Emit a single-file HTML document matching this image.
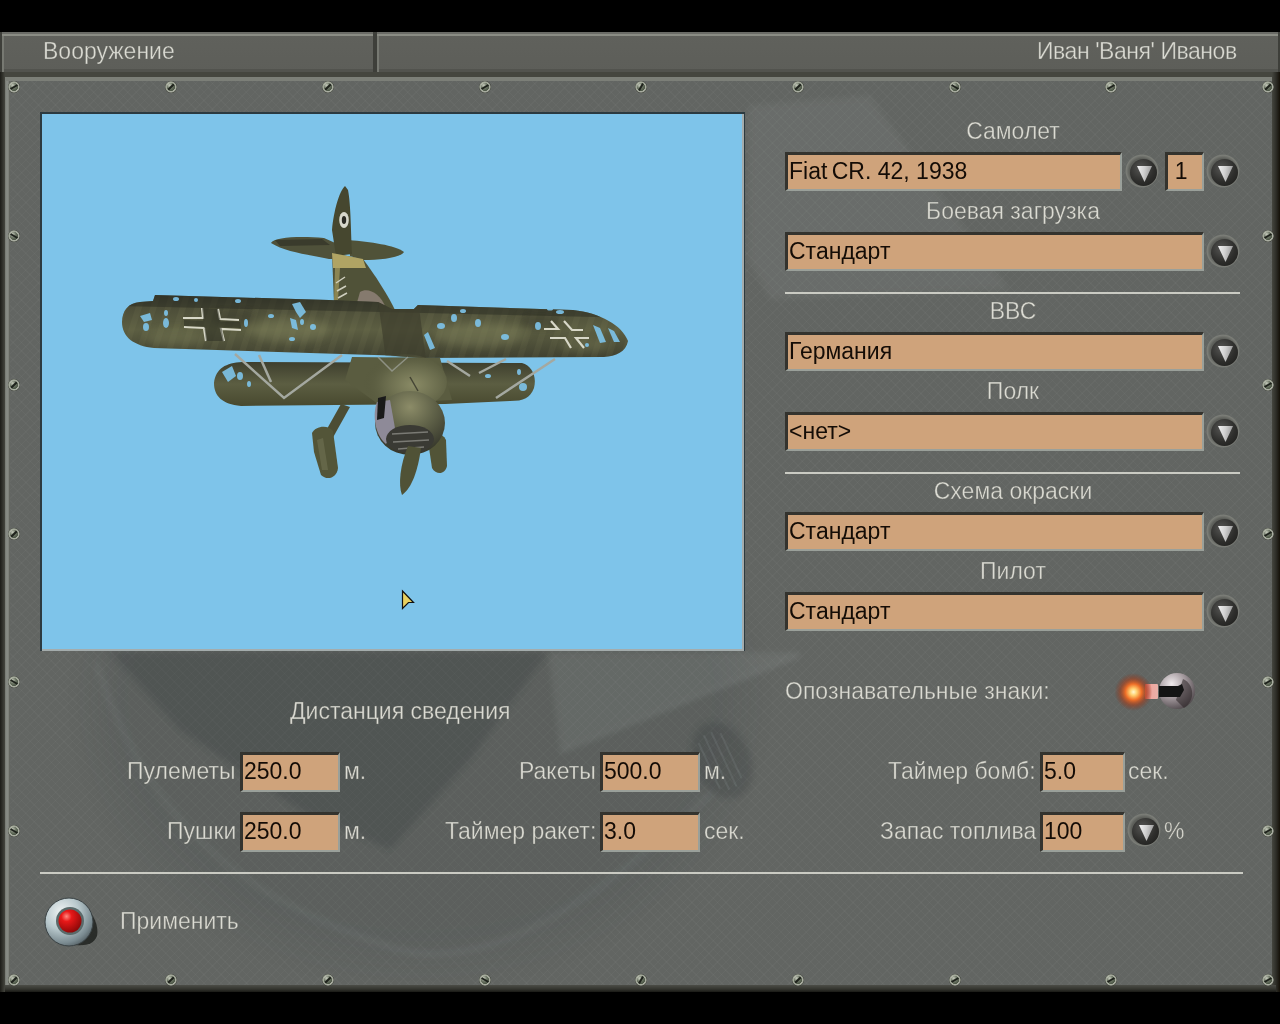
<!DOCTYPE html>
<html><head><meta charset="utf-8">
<style>
*{margin:0;padding:0;box-sizing:border-box}
html,body{width:1280px;height:1024px;overflow:hidden;background:#000}
body{position:relative;font-family:"Liberation Sans",sans-serif;font-size:23px;color:#dcdcd4}
.abs{position:absolute}
.hdr{position:absolute;left:0;top:32px;width:1280px;height:40px;background:#3e3f3a}
.tab{position:absolute;top:32px;height:40px;background:linear-gradient(#60615c,#5d5e59);border-top:2px solid #6a6b66;box-shadow:inset 0 2px 0 #8a8c84,inset 2px 0 0 #777972,inset 0 -3px 0 #52534e}
.frame{position:absolute;left:0;top:72px;width:1280px;height:920px;background:linear-gradient(90deg,#1c1c17 0,#45463f 5px,#45463f 1272px,#2e2e28 1276px,#141008 1280px)}
.bev{position:absolute;left:5px;top:77px;width:1267px;height:908px;background:linear-gradient(#7c7f78,#7c7f78) 0 0/100% 4px no-repeat,linear-gradient(90deg,#74776f,#8a8e88 2px,#7a7d76 4px,#50524c 5px) 0 0/5px 100% no-repeat}
.face{position:absolute;left:10px;top:81px;width:1262px;height:904px;background-color:#626562;
 background-image:repeating-linear-gradient(45deg,rgba(255,255,255,0.025) 0 1px,transparent 1px 6px),repeating-linear-gradient(-45deg,rgba(255,255,255,0.025) 0 1px,transparent 1px 6px)}
.fbot{position:absolute;left:5px;top:985px;width:1271px;height:7px;background:linear-gradient(#4c4d47,#34352f 4px,#1a1a16)}
.screw{position:absolute;width:12px;height:12px;border-radius:50%;background:radial-gradient(circle at 38% 35%,rgba(210,214,200,.9) 0,rgba(150,158,140,.4) 30%,rgba(0,0,0,0) 55%),radial-gradient(circle closest-side,#5a6454 0,#4a5444 62%,#aeb2a6 72%,#9a9e92 88%,#34372f 100%)}
.screw i{position:absolute;left:2px;top:5px;width:8px;height:2px;background:#1e221c}
.lbl{position:absolute;white-space:pre;line-height:1;will-change:transform;-webkit-text-stroke:0.5px rgba(100,101,96,0.7);transform:scaleY(1.075);transform-origin:0 19.5px}
.lbl.c{width:600px;text-align:center}
.fld{position:absolute;background:#cfa37b;border-top:3px solid #34332e;border-left:3px solid #34332e;border-right:2px solid #9aa09a;border-bottom:2px solid #9aa09a;color:#140c06;white-space:pre;line-height:1}
.fld span{position:absolute;left:1px;top:5px;will-change:transform;transform:scaleY(1.075);transform-origin:0 19.5px}
.btn{position:absolute;width:34px;height:34px;border-radius:50%;background:radial-gradient(circle closest-side,#4a4c47 0,#5e605b 75%,#7c7e78 93%,rgba(90,92,87,0) 100%)}
.btn::before{content:"";position:absolute;left:5px;top:5px;width:27px;height:27px;border-radius:50%;background:radial-gradient(circle at 40% 35%,#555553 0,#2e2e2c 55%,#1a1a18 100%)}
.btn::after{content:"";position:absolute;left:12px;top:12px;width:15px;height:16px;clip-path:polygon(0 0,100% 0,50% 100%);background:linear-gradient(100deg,#f4f4f4 0,#d0d0d0 45%,#8a8a8a 100%)}
.hr{position:absolute;height:2px;background:#cacbc3}
</style></head><body>
<div class="hdr"></div>
<div class="tab" style="left:2px;width:371px"></div>
<div class="tab" style="left:377px;width:901px"></div>
<div class="lbl" style="left:43px;top:40px">Вооружение</div>
<div class="lbl" style="right:43px;top:40px;letter-spacing:-0.45px">Иван 'Ваня' Иванов</div>
<div class="frame"></div>
<div class="bev"></div>
<div class="face"></div>
<div class="fbot"></div>
<svg class="abs" style="left:0;top:0" width="1280" height="1024">
<defs><filter id="bl" x="-50%" y="-50%" width="200%" height="200%"><feGaussianBlur stdDeviation="18"/></filter>
<filter id="bl2"><feGaussianBlur stdDeviation="3"/></filter>
<clipPath id="fc"><rect x="10" y="81" width="1262" height="904"/></clipPath></defs>
<g clip-path="url(#fc)">
<ellipse cx="420" cy="700" rx="322" ry="260" fill="#263038" opacity=".10" filter="url(#bl)"/>
<path d="M110 652 L548 652 L470 760 L390 850 L300 810 L180 730 Z" fill="#1a2226" opacity=".16" filter="url(#bl2)"/>
<path d="M548 652 L800 652 L800 656 L560 752 Z" fill="#d8e0e0" opacity=".07" filter="url(#bl2)"/>
<path d="M560 752 L800 655" stroke="#c8d4d8" stroke-width="3" opacity=".10" filter="url(#bl2)"/>
<path d="M96 662 C140 800 220 895 400 950 C500 975 620 880 712 792" fill="none" stroke="#c8d8dc" stroke-width="4" opacity=".09" filter="url(#bl2)"/>
<ellipse cx="722" cy="760" rx="28" ry="40" transform="rotate(-25 722 760)" fill="#1c2426" opacity=".16" filter="url(#bl2)"/>
<g transform="rotate(-25 722 760)" stroke="#b8c4c8" stroke-width="2" opacity=".10"><path d="M708 735 L708 785 M716 730 L716 790 M724 730 L724 790 M732 735 L732 785"/></g>
<path d="M748 105 L870 95 L1010 290 L770 300 L748 260 Z" fill="#e8f0f0" opacity=".05" filter="url(#bl2)"/>
</g>
</svg>
<div class="screw" style="left:8px;top:81px"><i style="transform:rotate(-30deg)"></i></div>
<div class="screw" style="left:165px;top:81px"><i style="transform:rotate(135deg)"></i></div>
<div class="screw" style="left:322px;top:81px"><i style="transform:rotate(135deg)"></i></div>
<div class="screw" style="left:479px;top:81px"><i style="transform:rotate(-30deg)"></i></div>
<div class="screw" style="left:635px;top:81px"><i style="transform:rotate(-60deg)"></i></div>
<div class="screw" style="left:792px;top:81px"><i style="transform:rotate(135deg)"></i></div>
<div class="screw" style="left:949px;top:81px"><i style="transform:rotate(30deg)"></i></div>
<div class="screw" style="left:1105px;top:81px"><i style="transform:rotate(150deg)"></i></div>
<div class="screw" style="left:1262px;top:81px"><i style="transform:rotate(135deg)"></i></div>
<div class="screw" style="left:8px;top:974px"><i style="transform:rotate(-45deg)"></i></div>
<div class="screw" style="left:165px;top:974px"><i style="transform:rotate(135deg)"></i></div>
<div class="screw" style="left:322px;top:974px"><i style="transform:rotate(-45deg)"></i></div>
<div class="screw" style="left:479px;top:974px"><i style="transform:rotate(30deg)"></i></div>
<div class="screw" style="left:635px;top:974px"><i style="transform:rotate(-60deg)"></i></div>
<div class="screw" style="left:792px;top:974px"><i style="transform:rotate(135deg)"></i></div>
<div class="screw" style="left:949px;top:974px"><i style="transform:rotate(-30deg)"></i></div>
<div class="screw" style="left:1105px;top:974px"><i style="transform:rotate(-30deg)"></i></div>
<div class="screw" style="left:1262px;top:974px"><i style="transform:rotate(150deg)"></i></div>
<div class="screw" style="left:8px;top:230px"><i style="transform:rotate(30deg)"></i></div>
<div class="screw" style="left:8px;top:379px"><i style="transform:rotate(135deg)"></i></div>
<div class="screw" style="left:8px;top:528px"><i style="transform:rotate(135deg)"></i></div>
<div class="screw" style="left:8px;top:676px"><i style="transform:rotate(30deg)"></i></div>
<div class="screw" style="left:8px;top:825px"><i style="transform:rotate(30deg)"></i></div>
<div class="screw" style="left:1262px;top:230px"><i style="transform:rotate(150deg)"></i></div>
<div class="screw" style="left:1262px;top:379px"><i style="transform:rotate(-30deg)"></i></div>
<div class="screw" style="left:1262px;top:528px"><i style="transform:rotate(-30deg)"></i></div>
<div class="screw" style="left:1262px;top:676px"><i style="transform:rotate(150deg)"></i></div>
<div class="screw" style="left:1262px;top:825px"><i style="transform:rotate(-30deg)"></i></div>
<div class="abs" style="left:40px;top:112px;width:705px;height:539px;background:#2c3a40"></div>
<div class="abs" style="left:42px;top:114px;width:702px;height:537px;background:#a4acac"></div>
<div class="abs" style="left:42px;top:114px;width:700px;height:535px;background:#7ec4ea;overflow:hidden"></div>
<svg class="abs" style="left:42px;top:114px" width="700" height="535" viewBox="42 114 700 535">
<defs>
<linearGradient id="wg" x1="0" y1="0" x2="0" y2="1"><stop offset="0" stop-color="#35362a"/><stop offset=".2" stop-color="#4c4d38"/><stop offset=".55" stop-color="#5c5e42"/><stop offset="1" stop-color="#404130"/></linearGradient>
<linearGradient id="lg" x1="0" y1="0" x2="0" y2="1"><stop offset="0" stop-color="#3e3f2e"/><stop offset=".5" stop-color="#5c5e42"/><stop offset="1" stop-color="#48492f"/></linearGradient>
<radialGradient id="eg" cx=".5" cy=".25" r=".75"><stop offset="0" stop-color="#8c8c68"/><stop offset=".45" stop-color="#62644a"/><stop offset="1" stop-color="#34352a"/></radialGradient>
<pattern id="ribs" width="14" height="60" patternUnits="userSpaceOnUse" patternTransform="rotate(18)"><rect width="6" height="60" fill="#8a8a60" opacity=".10"/></pattern>
<clipPath id="uw"><path d="M122 322 C122 311 128 303 140 302 L153 301 L155 295 L329 300 L378 302 L392 309 L414 309 L418 305 L573 310 C600 313 622 325 628 341 C626 352 616 356 604 357 L420 358 L390 355.5 L154 348 C134 346 122 337 122 322 Z"/></clipPath>
</defs>
<!-- tail -->
<path d="M271 243 C274 237 300 236 324 238 L342 246 L338 259 L329 259 C310 255 285 252 271 243 Z" fill="#4f513a"/>
<path d="M275 240 L322 239 L330 245 L280 246 Z" fill="#3a3b2c"/>
<path d="M349 240 C370 242 395 245 404 252 C400 258 380 260 363 260 L350 256 Z" fill="#505238"/>
<path d="M345 186 C339 192 334 210 332 230 L336 256 L352 254 C351 235 351 205 348 190 Z" fill="#46472f"/>
<ellipse cx="344" cy="220" rx="4.8" ry="8" fill="#d8d8cc"/><ellipse cx="344" cy="220" rx="2.2" ry="4" fill="#2a2a24"/>
<!-- fuselage rear -->
<path d="M332 253 L363 259 C375 275 388 295 396 312 L334 303 Z" fill="#505238"/>
<path d="M332 253 L363 259 L366 268 L333 268 Z" fill="#b0a464"/>
<path d="M335 268 L340 268 L338 300 L334 300 Z" fill="#b2a866" opacity=".6"/>
<path d="M336 283 L345 277 M337 291 L346 286 M338 298 L347 293" stroke="#cfcfbf" stroke-width="1.5"/>
<path d="M360 292 C368 287 380 293 386 308 L356 306 Z" fill="#857a6e"/>
<!-- lower wing -->
<path d="M214 383 C216 368 226 363 242 362 L522 363 C532 366 537 376 534 388 C530 398 524 401 510 401 L445 404 L241 406 C222 404 214 396 214 383 Z" fill="url(#lg)"/>
<g fill="#7ec4ea" opacity=".9">
<path d="M222 372 L232 366 L236 376 L228 382 Z"/><ellipse cx="240" cy="376" rx="3" ry="4"/><ellipse cx="249" cy="384" rx="2" ry="3"/>
<ellipse cx="488" cy="376" rx="3" ry="2"/><ellipse cx="523" cy="387" rx="4" ry="4"/><ellipse cx="519" cy="372" rx="2" ry="3"/>
</g>
<!-- struts -->
<g stroke="#a4a8a0" stroke-width="2.5" fill="none">
<path d="M235 354 L284 398 L342 355"/><path d="M259 355 L271 382"/>
<path d="M555 359 L496 398 M506 359 L479 373 M447 361 L470 376"/>
</g>
<!-- upper wing -->
<path d="M122 322 C122 311 128 303 140 302 L153 301 L155 295 L329 300 L378 302 L392 309 L414 309 L418 305 L573 310 C600 313 622 325 628 341 C626 352 616 356 604 357 L420 358 L390 355.5 L154 348 C134 346 122 337 122 322 Z" fill="url(#wg)"/>
<g clip-path="url(#uw)">
<rect x="120" y="290" width="520" height="70" fill="url(#ribs)"/>
<path d="M120 290 L640 305 L640 318 L120 306 Z" fill="#2e2f24" opacity=".55"/>
<path d="M378 300 L418 300 L426 360 L386 360 Z" fill="#3e3f2e" opacity=".7"/>
<filter id="pb"><feGaussianBlur stdDeviation="4"/></filter>
<g filter="url(#pb)" opacity=".35">
<ellipse cx="290" cy="330" rx="40" ry="12" fill="#8a8c64"/>
<ellipse cx="175" cy="338" rx="30" ry="8" fill="#80825c"/>
<ellipse cx="480" cy="335" rx="45" ry="12" fill="#8a8c64"/>
<ellipse cx="585" cy="345" rx="25" ry="7" fill="#80825c"/>
<ellipse cx="235" cy="318" rx="22" ry="8" fill="#2a2b20"/>
<ellipse cx="540" cy="322" rx="22" ry="8" fill="#2a2b20"/>
</g>
</g>
<!-- holes -->
<g fill="#7ec4ea" opacity=".9">
<path d="M140 316 L150 313 L152 320 L144 322 Z"/><ellipse cx="146" cy="327" rx="3" ry="4"/><ellipse cx="166" cy="323" rx="3" ry="5"/><ellipse cx="166" cy="313" rx="2" ry="3"/>
<ellipse cx="246" cy="323" rx="2" ry="4"/><ellipse cx="271" cy="316" rx="3" ry="2"/><ellipse cx="292" cy="339" rx="3" ry="2"/>
<path d="M292 304 L300 302 L306 312 L300 318 L296 312 Z"/><path d="M290 318 L296 320 L298 330 L292 328 Z"/><ellipse cx="302" cy="322" rx="2" ry="3"/><ellipse cx="313" cy="327" rx="3" ry="3"/>
<ellipse cx="176" cy="299" rx="3" ry="2"/><ellipse cx="196" cy="300" rx="2" ry="2"/><ellipse cx="238" cy="301" rx="3" ry="2"/>
<path d="M424 335 L428 332 L435 348 L430 350 Z"/><ellipse cx="441" cy="326" rx="4" ry="3"/><ellipse cx="454" cy="318" rx="3" ry="4"/><ellipse cx="478" cy="323" rx="3" ry="4"/><ellipse cx="463" cy="311" rx="3" ry="2"/>
<ellipse cx="505" cy="337" rx="4" ry="3"/><ellipse cx="538" cy="326" rx="3" ry="4"/><ellipse cx="560" cy="312" rx="4" ry="2"/><ellipse cx="550" cy="309" rx="3" ry="1.5"/>
<path d="M593 325 L600 328 L606 342 L600 343 Z"/><path d="M608 328 L614 331 L620 342 L614 342 Z"/><ellipse cx="587" cy="345" rx="2" ry="2"/>
</g>
<!-- crosses -->
<g stroke="#d8d8c8" stroke-width="2.2" fill="none" stroke-linejoin="miter">
<path d="M183 318 L203 318 L202 308"/><path d="M218 309 L220 319 L239 320"/><path d="M184 327 L204 328 L206 341"/><path d="M241 330 L221 329 L224 341"/>
<path d="M544 329 L558 329 L551 321"/><path d="M564 321 L572 330 L583 330"/><path d="M550 338 L565 338 L571 348"/><path d="M589 338 L576 338 L584 348"/>
</g>
<path d="M203 318 L220 318 L221 329 L204 328 Z M202 308 L218 309 L224 341 L206 341 Z M184 320 L240 322 L241 328 L184 326 Z" fill="#2a2b22" opacity=".5"/>
<!-- fuselage between wings -->
<radialGradient id="fg" cx=".6" cy=".55" r=".6"><stop offset="0" stop-color="#8a8b66"/><stop offset=".6" stop-color="#66684a"/><stop offset="1" stop-color="#55573c" stop-opacity="0"/></radialGradient>
<path d="M352 357 L440 358 L452 400 L378 404 L345 380 Z" fill="#5a5c40"/>
<ellipse cx="405" cy="382" rx="42" ry="28" fill="url(#fg)"/>
<path d="M378 357 L392 371 L408 357" stroke="#9a9e94" stroke-width="1.5" fill="none" opacity=".8"/>
<path d="M410 377 L418 391" stroke="#2a2a22" stroke-width="1.5" opacity=".7"/>
<!-- landing gear -->
<path d="M341 404 L350 407 L331 441 L323 436 Z" fill="#4c4d34"/>
<path d="M312 433 C315 426 328 424 333 431 L338 468 C337 478 327 481 321 475 L314 452 Z" fill="#535538"/>
<path d="M317 440 L323 438 L328 470 L322 470 Z" fill="#6c6d50" opacity=".7"/>
<path d="M428 441 C432 432 442 432 446 440 L447 466 C445 475 436 475 432 468 Z" fill="#525437"/>
<!-- engine -->
<ellipse cx="410" cy="423" rx="35" ry="32" fill="url(#eg)"/>
<path d="M377 402 C372 415 375 435 386 444 L395 428 L390 400 Z" fill="#8e8a98"/>
<path d="M378 398 L386 396 L384 418 L377 420 Z" fill="#1a1a1a"/>
<ellipse cx="410" cy="439" rx="24" ry="14" fill="#3a3a34"/>
<path d="M392 434 L428 432 M393 442 L429 440 M398 449 L424 447" stroke="#7a7a74" stroke-width="1.5"/>
<path d="M408 446 L421 448 C418 470 412 488 402 495 C398 485 400 465 408 446 Z" fill="#505236"/>
<!-- cursor -->
<path d="M402.5 591 L413.5 602.5 L408.5 602.5 L402.5 608.5 Z" fill="#e8d060" stroke="#111" stroke-width="1.2" stroke-linejoin="miter"/>
</svg>


<!-- apply button -->
<svg class="abs" style="left:40px;top:892px" width="64" height="62" viewBox="40 892 64 62">
<defs>
<radialGradient id="sg" cx=".35" cy=".3" r=".8"><stop offset="0" stop-color="#f0f4f4"/><stop offset=".45" stop-color="#b8c8cc"/><stop offset=".8" stop-color="#7a8a90"/><stop offset="1" stop-color="#4a5458"/></radialGradient>
<radialGradient id="rg" cx=".35" cy=".3" r=".75"><stop offset="0" stop-color="#ff8a80"/><stop offset=".3" stop-color="#e81818"/><stop offset="1" stop-color="#8a0808"/></radialGradient>
</defs>
<path d="M84 906 C94 914 99 926 97 936 C94 944 86 946 76 945 L70 940 Z" fill="#1c1e1c" opacity=".8"/>
<circle cx="69" cy="922" r="24" fill="url(#sg)"/>
<circle cx="69" cy="922" r="24" fill="none" stroke="#3a4244" stroke-width="1"/>
<circle cx="70" cy="921" r="14" fill="#5a6a6a"/>
<circle cx="70" cy="921" r="11.5" fill="url(#rg)"/>
</svg>
<!-- toggle -->
<svg class="abs" style="left:1105px;top:660px" width="100" height="60" viewBox="1105 660 100 60">
<defs>
<radialGradient id="gl" cx=".5" cy=".5" r=".5"><stop offset="0" stop-color="#fff8d0"/><stop offset=".18" stop-color="#ffd070"/><stop offset=".42" stop-color="#f07028"/><stop offset=".7" stop-color="#a83c18" stop-opacity=".55"/><stop offset="1" stop-color="#802810" stop-opacity="0"/></radialGradient>
<radialGradient id="dg" cx=".35" cy=".3" r=".85"><stop offset="0" stop-color="#f0eaec"/><stop offset=".45" stop-color="#a49a9e"/><stop offset=".8" stop-color="#625a5e"/><stop offset="1" stop-color="#3a3436"/></radialGradient>
<linearGradient id="pk" x1="0" x2="1"><stop offset="0" stop-color="#d86058"/><stop offset=".5" stop-color="#eea8a0"/><stop offset="1" stop-color="#e8b0a8"/></linearGradient>
</defs>
<circle cx="1177" cy="691" r="18" fill="url(#dg)"/>
<path d="M1183 679 C1194 684 1196 700 1184 708 L1176 700 Z" fill="#2a2224" opacity=".55"/>
<path d="M1159 686 L1178 686 L1182 684 L1184 690 L1180 697 L1159 697 Z" fill="#141414"/>
<rect x="1145" y="684" width="13" height="15" rx="1" fill="url(#pk)"/>
<circle cx="1133.5" cy="692" r="19" fill="url(#gl)"/>
</svg>
<div class="lbl c" style="left:712.5px;top:120px">Самолет</div>
<div class="fld" style="left:785px;top:152px;width:337px;height:39px"><span>Fiat<span style="position:static;word-spacing:-2px"> </span>CR. 42, 1938</span></div>
<div class="btn" style="left:1125px;top:154px"></div>
<div class="fld" style="left:1165px;top:152px;width:39px;height:39px"><span>&#8202;&#8202;&#8202;1</span></div>
<div class="btn" style="left:1206px;top:154px"></div>
<div class="lbl c" style="left:712.5px;top:200px">Боевая загрузка</div>
<div class="fld" style="left:785px;top:232px;width:419px;height:39px"><span>Стандарт</span></div>
<div class="btn" style="left:1206px;top:234px"></div>
<div class="lbl c" style="left:712.5px;top:300px">ВВС</div>
<div class="fld" style="left:785px;top:332px;width:419px;height:39px"><span>Германия</span></div>
<div class="btn" style="left:1206px;top:334px"></div>
<div class="lbl c" style="left:712.5px;top:380px">Полк</div>
<div class="fld" style="left:785px;top:412px;width:419px;height:39px"><span>&lt;нет&gt;</span></div>
<div class="btn" style="left:1206px;top:414px"></div>
<div class="lbl c" style="left:712.5px;top:480px">Схема окраски</div>
<div class="fld" style="left:785px;top:512px;width:419px;height:39px"><span>Стандарт</span></div>
<div class="btn" style="left:1206px;top:514px"></div>
<div class="lbl c" style="left:712.5px;top:560px">Пилот</div>
<div class="fld" style="left:785px;top:592px;width:419px;height:39px"><span>Стандарт</span></div>
<div class="btn" style="left:1206px;top:594px"></div>
<div class="hr" style="left:785px;top:292px;width:455px"></div>
<div class="hr" style="left:785px;top:472px;width:455px"></div>
<div class="hr" style="left:40px;top:872px;width:1203px"></div>
<div class="lbl" style="left:785px;top:680px">Опознавательные знаки:</div>
<div class="lbl" style="left:290px;top:700px">Дистанция сведения</div>
<div class="lbl" style="right:1044px;top:760px">Пулеметы</div>
<div class="fld" style="left:240px;top:752px;width:100px;height:40px"><span>250.0</span></div>
<div class="lbl" style="left:344px;top:760px">м.</div>
<div class="lbl" style="right:684px;top:760px">Ракеты</div>
<div class="fld" style="left:600px;top:752px;width:100px;height:40px"><span>500.0</span></div>
<div class="lbl" style="left:704px;top:760px">м.</div>
<div class="lbl" style="right:244px;top:760px">Таймер бомб:</div>
<div class="fld" style="left:1040px;top:752px;width:85px;height:40px"><span>5.0</span></div>
<div class="lbl" style="left:1128px;top:760px">сек.</div>
<div class="lbl" style="right:1044px;top:820px">Пушки</div>
<div class="fld" style="left:240px;top:812px;width:100px;height:40px"><span>250.0</span></div>
<div class="lbl" style="left:344px;top:820px">м.</div>
<div class="lbl" style="right:684px;top:820px">Таймер ракет:</div>
<div class="fld" style="left:600px;top:812px;width:100px;height:40px"><span>3.0</span></div>
<div class="lbl" style="left:704px;top:820px">сек.</div>
<div class="lbl" style="right:244px;top:820px">Запас топлива</div>
<div class="fld" style="left:1040px;top:812px;width:85px;height:40px"><span>100</span></div>
<div class="btn" style="left:1127px;top:813px"></div>
<div class="lbl" style="left:1164px;top:820px">%</div>
<div class="lbl" style="left:120px;top:910px">Применить</div>
</body></html>
